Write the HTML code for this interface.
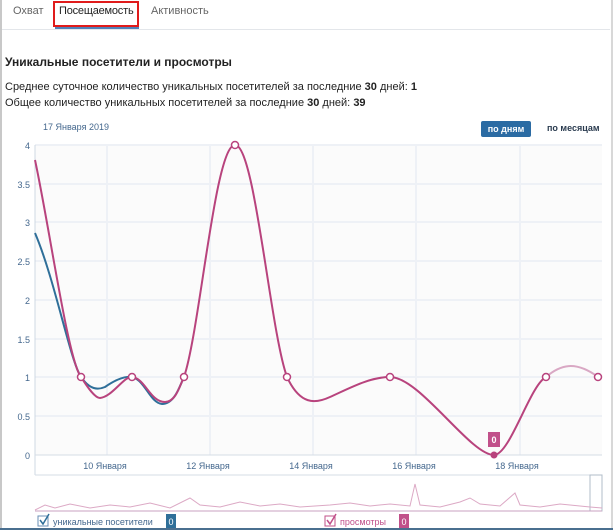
<!DOCTYPE html>
<html><head><meta charset="utf-8"><style>
body{margin:0;width:613px;height:530px;background:#fff;font-family:"Liberation Sans",Arial,sans-serif;overflow:hidden;position:relative}
.frame{position:absolute;left:0;top:0;height:528px;border-left:2px solid #c8c8c8;border-right:2px solid #d8d8d8;box-sizing:border-box;width:613px}
.tabs{position:absolute;left:2px;top:0;width:608px;height:29px;border-bottom:1px solid #e3e6ea}
.tab{position:absolute;top:5px;font-size:11px;color:#656565;white-space:nowrap}
.sel{position:absolute;left:53px;top:1px;width:86px;height:26px;border:2px solid #e01b1b;box-sizing:border-box}
.ul{position:absolute;left:55px;top:27px;width:84px;height:2px;background:#5181b8}
.t{position:absolute;font-size:11px;color:#222;white-space:nowrap}
.btn{position:absolute;left:481px;top:121px;width:50px;height:16px;background:#2b6ba3;border-radius:2px;color:#fff;font-size:9px;font-weight:bold;text-align:center;line-height:16px}
</style></head><body>
<div class="frame"></div>
<div class="tabs"></div>
<div class="tab" style="left:13px">Охват</div>
<div class="tab" style="left:59px;color:#222;letter-spacing:-0.2px">Посещаемость</div>
<div class="tab" style="left:151px">Активность</div>
<div class="sel"></div><div class="ul"></div>
<div class="t" style="left:5px;top:55px;font-weight:bold;font-size:12px">Уникальные посетители и просмотры</div>
<div class="t" style="left:5px;top:81px">Среднее суточное количество уникальных посетителей за последние <b>30</b> дней: <b>1</b></div>
<div class="t" style="left:5px;top:97px">Общее количество уникальных посетителей за последние <b>30</b> дней: <b>39</b></div>
<div class="t" style="left:43px;top:122px;font-size:9px;color:#45688e">17 Января 2019</div>
<div class="btn">по дням</div>
<div class="t" style="left:547px;top:123px;font-size:9px;font-weight:bold;color:#2b3c50">по месяцам</div>
<svg style="position:absolute;left:0;top:0" width="613" height="530" font-family="Liberation Sans,Arial,sans-serif">
<rect x="35" y="145" width="567" height="310" fill="#fbfbfb"/>
<g stroke="#eef1f6" stroke-width="2">
<line x1="35" y1="145" x2="602" y2="145"/><line x1="35" y1="184" x2="602" y2="184"/><line x1="35" y1="222" x2="602" y2="222"/><line x1="35" y1="261" x2="602" y2="261"/><line x1="35" y1="300" x2="602" y2="300"/><line x1="35" y1="339" x2="602" y2="339"/><line x1="35" y1="377" x2="602" y2="377"/><line x1="35" y1="416" x2="602" y2="416"/>
<line x1="107" y1="145" x2="107" y2="455"/><line x1="210" y1="145" x2="210" y2="455"/><line x1="313" y1="145" x2="313" y2="455"/><line x1="416" y1="145" x2="416" y2="455"/><line x1="520" y1="145" x2="520" y2="455"/>
</g>
<line x1="35" y1="145" x2="35" y2="475" stroke="#cfd8e3"/>
<line x1="35" y1="455" x2="602" y2="455" stroke="#d5dde6"/>
<line x1="35" y1="475" x2="602" y2="475" stroke="#d5dde6"/>
<g font-size="9" fill="#45688e" text-anchor="end">
<text x="30" y="149">4</text><text x="30" y="188">3.5</text><text x="30" y="226">3</text><text x="30" y="265">2.5</text><text x="30" y="304">2</text><text x="30" y="343">1.5</text><text x="30" y="381">1</text><text x="30" y="420">0.5</text><text x="30" y="459">0</text>
</g>
<g font-size="9" fill="#45688e" text-anchor="middle">
<text x="105" y="469">10 Января</text><text x="208" y="469">12 Января</text><text x="311" y="469">14 Января</text><text x="414" y="469">16 Января</text><text x="517" y="469">18 Января</text>
</g>
<path d="M35 233 C55 280 70 360 81 377 C90 390 98 390 105 387 C115 380 125 376 132 377 C145 380 150 403 162 404 C175 404 180 385 184 377" fill="none" stroke="#2f6f99" stroke-width="2"/>
<path d="M35 160 C50 230 68 360 81 377 C88 388 95 398 100 398 C112 397 124 376 132 377 C145 378 150 402 165 402 C176 402 180 385 184 377 C200 330 215 145 235 145 C255 145 270 330 287 377 C300 405 315 404 330 397 C350 388 370 377 390 377 C420 377 470 455 494 455 C510 455 530 385 546 377" fill="none" stroke="#b8437d" stroke-width="2"/>
<path d="M546 377 C560 365 575 360 598 377" fill="none" stroke="#d9a8c4" stroke-width="2"/>
<g fill="#fff" stroke="#b8437d" stroke-width="1.5">
<circle cx="81" cy="377" r="3.5"/><circle cx="132" cy="377" r="3.5"/><circle cx="184" cy="377" r="3.5"/><circle cx="235" cy="145" r="3.5"/><circle cx="287" cy="377" r="3.5"/><circle cx="390" cy="377" r="3.5"/><circle cx="546" cy="377" r="3.5"/><circle cx="598" cy="377" r="3.5"/>
</g>
<circle cx="494" cy="455" r="3.5" fill="#b8437d"/>
<rect x="488" y="432" width="12" height="15" fill="#c1508a"/><text x="494" y="443" font-size="9" fill="#fff" text-anchor="middle" font-weight="bold">0</text>
<rect x="590" y="475" width="12" height="36" fill="none" stroke="#b0bcc8"/>
<path d="M35 510 L45 505 L55 508 L70 504 L90 508 L110 505 L130 507 L150 503 L170 508 L190 498 L200 505 L220 507 L240 502 L260 506 L280 504 L300 507 L330 505 L350 503 L370 506 L390 504 L410 506 L415 484 L420 505 L440 507 L460 502 L470 498 L480 504 L500 506 L515 493 L520 505 L540 507 L560 504 L590 507 L602 508" fill="none" stroke="#dca9c5" stroke-width="1"/>
<line x1="35" y1="511" x2="602" y2="511" stroke="#c9a0c0"/>
<rect x="38" y="516" width="10" height="10" fill="#fff" stroke="#6a8fb5"/><path d="M40 520 L43 524 L49 514" stroke="#2f6f99" stroke-width="1.5" fill="none"/>
<text x="53" y="525" font-size="9" fill="#45688e">уникальные посетители</text>
<rect x="166" y="514" width="10" height="14" fill="#2f6f99"/><text x="171" y="525" font-size="9" fill="#fff" text-anchor="middle">0</text>
<rect x="325" y="516" width="10" height="10" fill="#fff" stroke="#c1508a"/><path d="M327 520 L330 524 L336 514" stroke="#c1508a" stroke-width="1.5" fill="none"/>
<text x="340" y="525" font-size="9" fill="#c1508a">просмотры</text>
<rect x="399" y="514" width="10" height="14" fill="#c1508a"/><text x="404" y="525" font-size="9" fill="#fff" text-anchor="middle">0</text>
<rect x="0" y="528" width="613" height="2" fill="#4a6f8f"/>
</svg>
</body></html>
